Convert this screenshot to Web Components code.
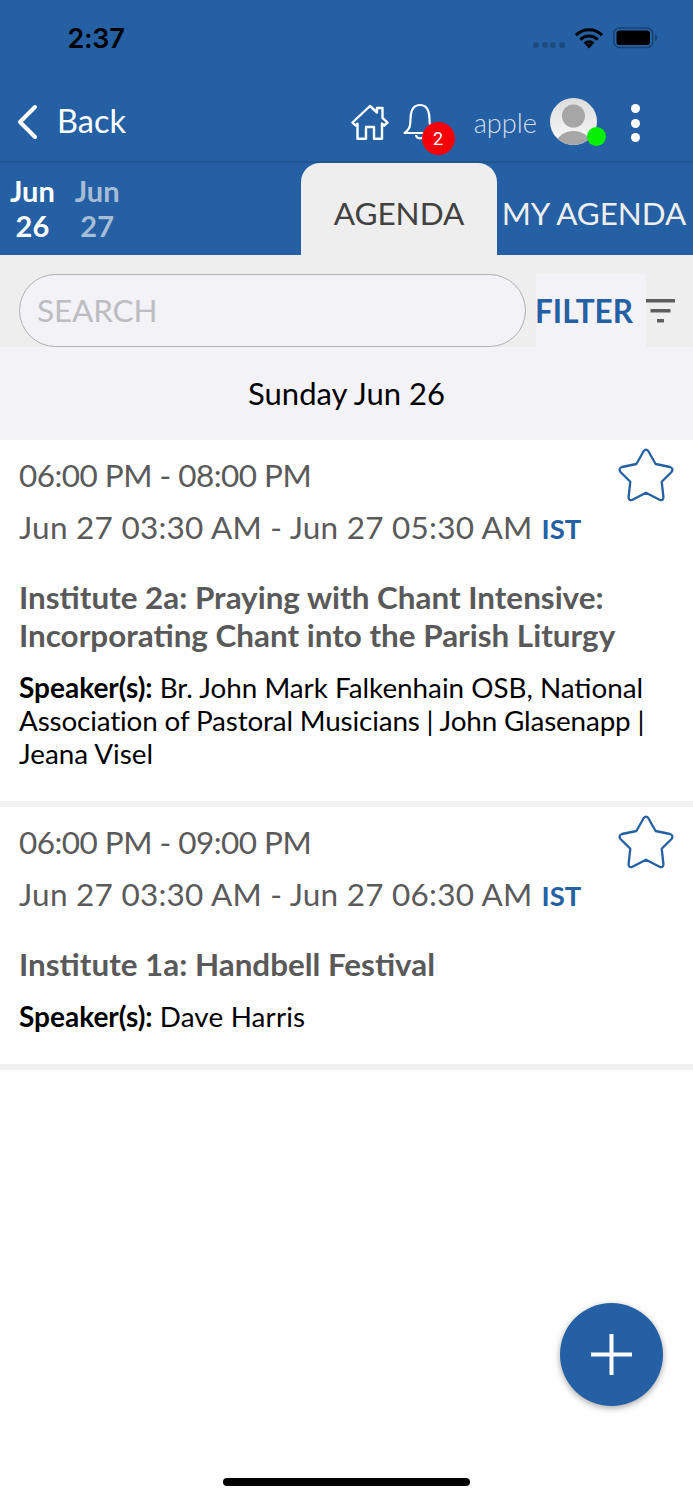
<!DOCTYPE html>
<html>
<head>
<meta charset="utf-8">
<style>
  html, body { margin: 0; padding: 0; background: #fefefe; }
  body { font-family: "Lato", "Liberation Sans", sans-serif; width: 693px; height: 1500px; overflow: hidden; position: relative; }
  session-card span { white-space: nowrap; }
</style>
</head>
<body>
<app-header></app-header>
<date-tabs></date-tabs>
<search-bar></search-bar>
<day-title>Sunday Jun 26</day-title>
<session-card time="06:00 PM - 08:00 PM" local="Jun 27 03:30 AM - Jun 27 05:30 AM" title-text="Institute 2a: Praying with Chant Intensive: Incorporating Chant into the Parish Liturgy" height="367"><span>Br. John Mark Falkenhain OSB, National</span> <span style="letter-spacing:-0.14px">Association of Pastoral Musicians | John Glasenapp |</span> <span>Jeana Visel</span></session-card>
<session-card time="06:00 PM - 09:00 PM" local="Jun 27 03:30 AM - Jun 27 06:30 AM" title-text="Institute 1a: Handbell Festival" height="263"><span style="letter-spacing:0.18px">Dave Harris</span></session-card>
<add-button></add-button>
<home-bar></home-bar>

<script>
class AppHeader extends HTMLElement {
    constructor() {
        super();
        this.attachShadow({ mode: "open" });
        this.shadowRoot.innerHTML = `
            <style>
                :host { display: block; background: #2460a3; height: 163px; box-sizing: border-box; box-shadow: inset 0 -2px 0 #20568f; color: #fff; }
                .status { height: 76px; display: flex; align-items: flex-start; }
                .clock { margin: 23px 0 0 67.500px; font: 600 27px/32px "Inter", sans-serif; color: #000; letter-spacing: -0.3px; flex: 1; }
                .sys { display: flex; align-items: flex-start; margin: 27px 35px 0 0; }
                .dots { display: flex; gap: 2.7px; margin: 15px 10px 0 0; }
                .dots i { width: 6px; height: 6px; border-radius: 50%; background: #1c4b80; }
                .nav { height: 87px; display: flex; align-items: flex-start; position: relative; }
                .back { display: flex; align-items: flex-start; flex: 1; }
                .back svg { margin: 28px 0 0 15px; }
                .back span { margin: 26px 0 0 18px; font-size: 32.500px; line-height: 38px; }
                .home { margin: 28px 0 0 0; }
                .bell { margin: 26px 0 0 14px; position: relative; width: 34px; height: 44px; }
                .badge { position: absolute; left: 19px; top: 20px; width: 33px; height: 33px; border-radius: 50%; background: #f60108; font: 400 18px/33px "Roboto", sans-serif; text-align: center; }
                .user { margin: 29px 0 0 37px; font-weight: 300; font-size: 27.200px; line-height: 36px; color: #d3deeb; }
                .avatar { margin: 22px 0 0 13px; position: relative; width: 47px; height: 47px; }
                .online { position: absolute; left: 37px; top: 29px; width: 19px; height: 19px; border-radius: 50%; background: #06f006; }
                .more { margin: 28px 53px 0 34px; display: flex; flex-direction: column; gap: 5.6px; }
                .more i { width: 9px; height: 9px; border-radius: 50%; background: #fff; }
            </style>
            <div class="status">
                <div class="clock">2:37</div>
                <div class="sys">
                    <div class="dots"><i></i><i></i><i></i><i></i></div>
                    <svg width="28" height="22" viewBox="0 0 28 22" style="margin-right:10px"><path d="M1 8.2a18.5 18.5 0 0 1 26 0M5.4 12.6a12.3 12.3 0 0 1 17.2 0M9.6 16.6a6.2 6.2 0 0 1 8.8 0" fill="none" stroke="#000" stroke-width="3"/><path d="M14 21.5l-3.4-3.6a4.8 4.8 0 0 1 6.8 0z" fill="#000"/></svg>
                    <svg width="45" height="22" viewBox="0 0 45 22"><rect x="0.8" y="1" width="39" height="19.5" rx="5.5" fill="none" stroke="#1a4272" stroke-width="1.5"/><rect x="3.5" y="3.5" width="33.5" height="14.5" rx="3" fill="#000"/><path d="M42 7.5c1.8.6 2.4 2 2.4 3.3s-.6 2.7-2.4 3.3z" fill="#1a4272"/></svg>
                </div>
            </div>
            <div class="nav">
                <div class="back">
                    <svg width="24" height="36" viewBox="0 0 24 36"><path d="M20 3 5 18l15 15" fill="none" stroke="#fff" stroke-width="4" stroke-linecap="round" stroke-linejoin="round"/></svg>
                    <span>Back</span>
                </div>
                <svg class="home" width="38" height="38" viewBox="0 0 38 38" fill="none" stroke="#fff" stroke-width="2.400" stroke-linejoin="round"><path d="M1.500 18.500 19 2l7 6.500V4h5.500v9.800L36.500 18.500 33.200 21.500 31 19.600V34.700H23V23H15V34.700H6.500V19.600L4.500 21.500Z"/></svg>
                <div class="bell">
                    <svg width="34" height="40" viewBox="0 0 34 40" fill="none" stroke="#fff" stroke-width="2.200" stroke-linejoin="round"><path d="M1.500 31c3.500-2 5.500-5 5.800-10 .4-5.500-.6-18 9.700-18 10.300 0 9.300 12.500 9.700 18 .3 5 2.300 8 5.800 10z"/><path d="M13 33c.5 4.500 7.500 4.500 8 0"/></svg>
                    <div class="badge">2</div>
                </div>
                <div class="user">apple</div>
                <div class="avatar">
                    <svg width="47" height="47" viewBox="0 0 47 47"><defs><linearGradient id="g" x1="0" y1="0" x2="0" y2="1"><stop offset="0" stop-color="#dcdcdc"/><stop offset="1" stop-color="#fafafa"/></linearGradient><clipPath id="c"><circle cx="23.500" cy="23.500" r="23.500"/></clipPath></defs><circle cx="23.500" cy="23.500" r="23.500" fill="url(#g)"/><circle cx="23.500" cy="18" r="11.500" fill="#a6a6a6"/><ellipse cx="23.500" cy="46" rx="17" ry="13" fill="#a6a6a6" clip-path="url(#c)"/></svg>
                    <div class="online"></div>
                </div>
                <div class="more"><i></i><i></i><i></i></div>
            </div>
        `;
    }
}

class DateTabs extends HTMLElement {
    constructor() {
        super();
        this.attachShadow({ mode: "open" });
        this.shadowRoot.innerHTML = `
            <style>
                :host { display: flex; height: 92px; background: #2460a3; color: #fff; }
                .dates { display: flex; flex: none; width: 301px; gap: 20px; padding: 10px 0 0 10px; box-sizing: border-box; }
                .d { text-align: center; font-weight: 700; font-size: 29px; line-height: 35px; }
                .off { color: #a7bdd7; }
                .tab { width: 196px; height: 92px; background: #eeeeee; color: #414141; border-radius: 19px 19px 0 0; text-align: center; font-size: 31.500px; line-height: 100px; }
                .mine { flex: 1; padding-right: 2px; text-align: center; font-size: 31.400px; line-height: 100px; color: #eeeeee; white-space: nowrap; }
            </style>
            <div class="dates">
                <div class="d">Jun<br>26</div>
                <div class="d off">Jun<br>27</div>
            </div>
            <div class="tab">AGENDA</div>
            <div class="mine">MY AGENDA</div>
        `;
    }
}

class SearchBar extends HTMLElement {
    constructor() {
        super();
        this.attachShadow({ mode: "open" });
        this.shadowRoot.innerHTML = `
            <style>
                :host { display: flex; height: 92px; background: #eeeeee; box-sizing: border-box; padding-top: 19px; }
                .pill { margin-left: 19px; width: 507px; height: 73px; box-sizing: border-box; border: 1px solid #b0b0b4; border-radius: 36.500px; background: #f2f2f7; color: #bdbdc1; font-size: 31.500px; letter-spacing: -0.15px; line-height: 71px; padding-left: 17px; }
                .filter { margin-left: 10px; width: 110px; height: 73px; background: #f2f2f7; color: #2460a3; font-weight: 700; font-size: 31.500px; line-height: 74px; text-indent: -1px; }
                svg { margin: 25px 0 0 0; }
            </style>
            <div class="pill">SEARCH</div>
            <div class="filter">FILTER</div>
            <svg width="29" height="24" viewBox="0 0 29 24" fill="#5e5e5e"><rect x="0" y="0" width="29" height="3.500"/><rect x="4.500" y="10" width="20" height="3.500"/><rect x="11" y="20" width="7" height="3.500"/></svg>
        `;
    }
}

class DayTitle extends HTMLElement {
    constructor() {
        super();
        this.attachShadow({ mode: "open" });
        this.shadowRoot.innerHTML = `
            <style>
                :host { display: block; height: 93px; background: #f2f2f7; color: #000; text-align: center; font-size: 31px; line-height: 92px; }
            </style>
            <slot></slot>
        `;
    }
}

class SessionCard extends HTMLElement {
    constructor() {
        super();
        this.attachShadow({ mode: "open" });
    }

    connectedCallback() {
        const h = this.getAttribute("height");
        this.shadowRoot.innerHTML = `
            <style>
                :host { display: block; position: relative; background: #fefefe; height: ${h}px; padding: 0 19px; box-sizing: border-box; border-bottom: 6px solid #f0f0f0; }
                .time { padding-top: 16px; font-size: 31.500px; letter-spacing: -0.53px; line-height: 38px; color: #5a5a5a; }
                .local { margin-top: 14px; font-size: 31.500px; letter-spacing: 0.25px; line-height: 38px; color: #5a5a5a; white-space: nowrap; display: flex; align-items: baseline; }
                .local b { margin-left: 9px; letter-spacing: 0; color: #2460a3; font-size: 27.500px; }
                h3 { margin: 30px 0 0; font-size: 31.400px; line-height: 38px; font-weight: 700; color: #595959; }
                p { margin: 17px 0 0; font-size: 27.800px; line-height: 33px; color: #000; }
                strong { font-size: 28px; }
                svg { position: absolute; left: 616px; top: 7px; }
            </style>
            <div class="time">${this.getAttribute("time")}</div>
            <div class="local"><span>${this.getAttribute("local")}</span><b>IST</b></div>
            <h3>${this.getAttribute("title-text")}</h3>
            <p><strong>Speaker(s):</strong> <slot></slot></p>
            <svg width="60" height="56" viewBox="0 0 60 56"><path d="M27.600 4.200Q30 1 32.400 4.200L39.600 17 54 20Q58 21.500 55.500 25L45.700 34.700 47.400 50Q47.500 54.500 43.500 52.700L30 45.700 16.500 52.700Q12.500 54.500 12.600 50L14.300 34.700 4.500 25Q2 21.500 6 20L20.400 17Z" fill="none" stroke="#2460a3" stroke-width="2.300" stroke-linejoin="round"/></svg>
        `;
    }
}

class AddButton extends HTMLElement {
    constructor() {
        super();
        this.attachShadow({ mode: "open" });
        this.shadowRoot.innerHTML = `
            <style>
                :host { display: flex; align-items: center; justify-content: center; position: absolute; left: 560px; top: 1303px; width: 103px; height: 103px; border-radius: 50%; background: #2460a3; box-shadow: 0 2px 6px rgba(0,0,0,.35); }
            </style>
            <svg width="41" height="41" viewBox="0 0 41 41" fill="#fff"><rect x="18.500" y="0" width="4" height="41"/><rect x="0" y="18.500" width="41" height="4"/></svg>
        `;
    }
}

class HomeBar extends HTMLElement {
    constructor() {
        super();
        this.attachShadow({ mode: "open" });
        this.shadowRoot.innerHTML = `
            <style>
                :host { display: block; position: absolute; left: 223px; top: 1478px; width: 247px; height: 8px; border-radius: 4px; background: #000; }
            </style>
        `;
    }
}

customElements.define("app-header", AppHeader);
customElements.define("date-tabs", DateTabs);
customElements.define("search-bar", SearchBar);
customElements.define("day-title", DayTitle);
customElements.define("session-card", SessionCard);
customElements.define("add-button", AddButton);
customElements.define("home-bar", HomeBar);
</script>
</body>
</html>
